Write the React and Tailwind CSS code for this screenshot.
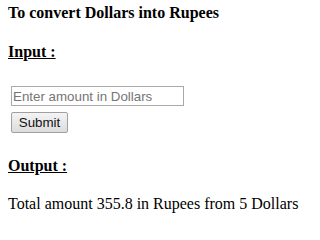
import React, { useState } from 'react';

export default function App() {
	const [amount, setAmount] = useState('');
	const [dollars] = useState(5);

	return (
		<div className="w-[308px] h-[221px] bg-white pl-2 font-['Liberation_Serif','Times_New_Roman',serif] text-[16px] text-black overflow-hidden">
			<div className="mt-[4px] leading-[18px] font-bold">To convert Dollars into Rupees</div>
			<div className="mt-[21px] leading-[18px] font-bold underline">Input :</div>
			<form
				className="flex flex-col items-start mt-[25px] ml-[3px]"
				onSubmit={e => e.preventDefault()}
			>
				<input
					type="text"
					value={amount}
					onChange={e => setAmount(e.target.value)}
					placeholder="Enter amount in Dollars"
					className="w-[173px] h-[20px] border border-[#a9a9a9] px-[1px] font-['Liberation_Sans',Arial,sans-serif] text-[13.33px] text-black placeholder:text-[#757575] outline-none"
				/>
				<button
					type="submit"
					className="mt-[6px] w-[57px] h-[21px] border border-[#a0a0a0] rounded-[2px] bg-gradient-to-b from-[#f4f4f4] to-[#dcdcdc] font-['Liberation_Sans',Arial,sans-serif] text-[13.33px] leading-none text-[#111]"
				>
					Submit
				</button>
			</form>
			<div className="mt-[24px] leading-[18px] font-bold underline">Output :</div>
			<div className="mt-[20px] leading-[18px]">
				Total amount 355.8 in Rupees from {dollars} Dollars
			</div>
		</div>
	);
}
